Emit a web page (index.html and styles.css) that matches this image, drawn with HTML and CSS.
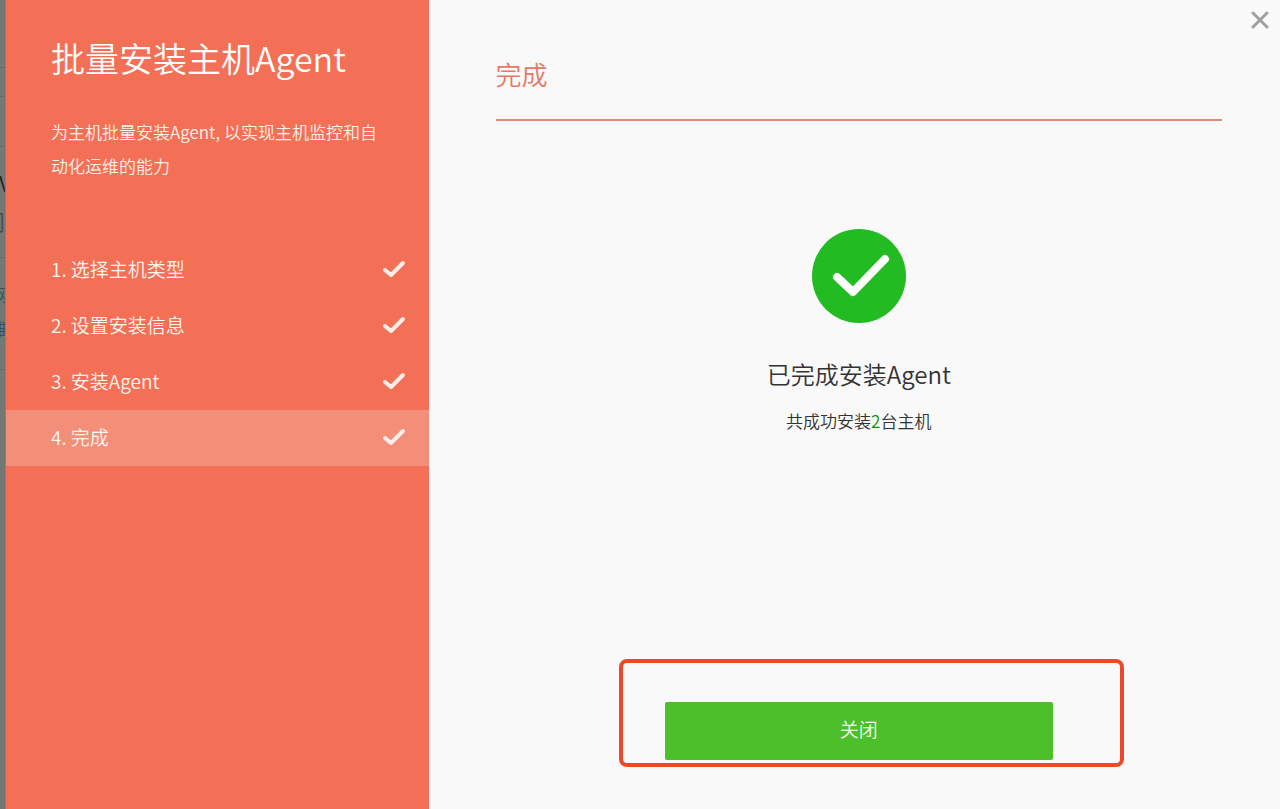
FILE: index.html
```html
<!DOCTYPE html>
<html lang="zh-CN">
<head>
<meta charset="utf-8">
<title>批量安装主机Agent</title>
<link rel="stylesheet" href="styles.css">
</head>
<body>
<div class="layout">
  <div class="backdrop" aria-hidden="true">
    <div class="strip strip-top"></div>
    <div class="strip strip-nav"></div>
    <div class="strip strip-bar"></div>
    <div class="strip strip-head"><p class="dark">V</p><p class="name">问</p></div>
    <div class="strip strip-links"><p>网</p><p>维</p></div>
  </div>
  <aside class="wizard">
    <header class="intro">
      <h1>批量安装主机Agent</h1>
      <p>为主机批量安装Agent, 以实现主机监控和自动化运维的能力</p>
    </header>
    <ol class="steps">
      <li><span>1. 选择主机类型</span><svg class="tick" viewBox="0 0 24 18"><path d="M3 10l6 5L21 3"/></svg></li>
      <li><span>2. 设置安装信息</span><svg class="tick" viewBox="0 0 24 18"><path d="M3 10l6 5L21 3"/></svg></li>
      <li><span>3. 安装Agent</span><svg class="tick" viewBox="0 0 24 18"><path d="M3 10l6 5L21 3"/></svg></li>
      <li class="current" aria-current="step"><span>4. 完成</span><svg class="tick" viewBox="0 0 24 18"><path d="M3 10l6 5L21 3"/></svg></li>
    </ol>
  </aside>
  <main class="content">
    <button class="dismiss" type="button" aria-label="关闭窗口"><svg viewBox="0 0 18 18"><path d="M2 2l14 14M16 2L2 16"/></svg></button>
    <h2>完成</h2>
    <section class="result">
      <svg class="badge" viewBox="0 0 94 94"><circle cx="47" cy="47" r="47"/><path d="M25 48l16 15 32-33"/></svg>
      <h3>已完成安装Agent</h3>
      <p>共成功安装<span class="count">2</span>台主机</p>
    </section>
    <div class="actions">
      <button class="close" type="button">关闭</button>
      <span class="marker"></span>
    </div>
  </main>
</div>
</body>
</html>
```
FILE: styles.css
```css
* { box-sizing: border-box; }
body {
  margin: 0;
  font-family: "Noto Sans CJK SC", sans-serif;
  font-weight: 350;
  background: #f9f9f9;
}
h1, h2, h3, p, ol { margin: 0; padding: 0; font-weight: 350; }
button { font: inherit; border: 0; padding: 0; cursor: pointer; }
svg { display: block; fill: none; stroke-linecap: round; stroke-linejoin: round; }
.layout {
  display: grid;
  grid-template-columns: 6px 33fr 66.5fr;
  min-height: 100vh;
}
.backdrop { background: #727873; overflow: hidden; border-right: 1px solid #8a807a; }
.strip { border-bottom: 1px solid #656b66; white-space: nowrap; }
.strip-top { height: 68px; }
.strip-nav { height: 29px; }
.strip-bar { height: 50px; }
.strip-head { height: 111px; padding-top: 16px; font-size: 22px; line-height: 38px; }
.strip-links { height: 112px; padding-top: 19px; font-size: 16px; line-height: 34px; color: #304f68; }
.strip-head p { text-indent: -17px; color: #484d4a; }
.strip-head .dark { text-indent: -1px; color: #202321; }
.strip-links p { text-indent: -8px; }

.wizard { background: #f37056; color: #fff; }
.intro { padding: 33px 48px 59px 45px; }
.intro h1 { font-size: 34px; line-height: 50px; }
.intro p { margin-top: 32px; font-size: 17px; line-height: 34px; color: #fff0ea; }
.steps { list-style: none; font-size: 19px; color: #fff4ef; }
.steps li {
  display: flex;
  align-items: center;
  justify-content: space-between;
  height: 56px;
  padding: 0 23px 3px 45px;
}
.steps .current { background: #f38e78; }
.tick { width: 24px; height: 18px; stroke: #ffeee9; stroke-width: 4; }

.content {
  position: relative;
  display: flex;
  flex-direction: column;
  padding: 53px 58px 49px 67px;
}
.content h2 {
  font-size: 26px;
  line-height: 42px;
  padding-bottom: 24px;
  color: #e77766;
  border-bottom: 2px solid #e08a80;
}
.dismiss { position: absolute; top: 11px; right: 11px; background: none; }
.dismiss svg { width: 18px; height: 18px; stroke: #a0a0a0; stroke-width: 3; }
.result {
  display: flex;
  flex-direction: column;
  align-items: center;
  padding-top: 108px;
  color: #333;
}
.badge { width: 94px; height: 94px; }
.badge circle { fill: #22bb22; }
.badge path { stroke: #fff; stroke-width: 8; }
.result h3 { margin-top: 33px; font-size: 24px; line-height: 36px; }
.result p { margin-top: 16px; font-size: 17px; line-height: 26px; }
.count { color: #0a960a; }
.actions { position: relative; width: 388px; max-width: 100%; margin: auto auto 0; }
.close {
  display: block;
  width: 100%;
  height: 58px;
  padding-bottom: 5px;
  font-size: 19px;
  color: #f0ffec;
  background: #4cbf2b;
  border-radius: 2px;
}
.marker {
  position: absolute;
  inset: -43px -71px -7px -46px;
  border: 4px solid #ea492b;
  border-radius: 8px;
  pointer-events: none;
}
```
